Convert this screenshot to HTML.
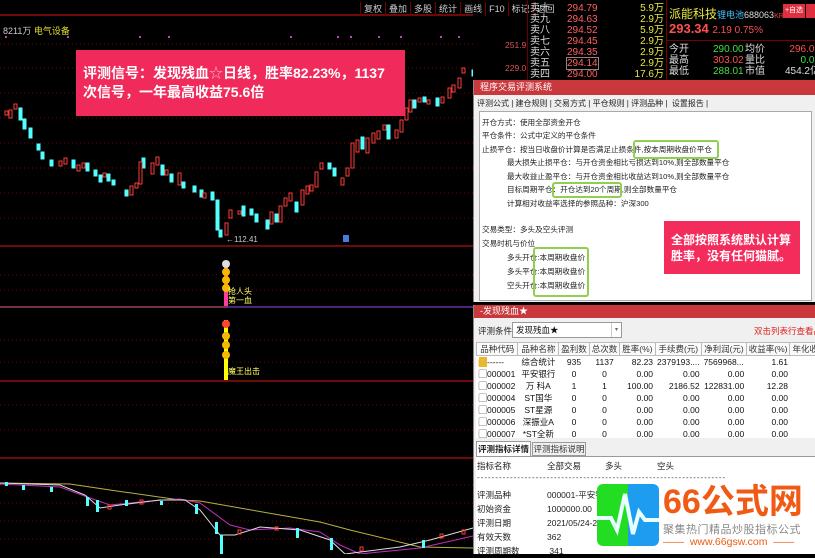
<!DOCTYPE html>
<html><head><meta charset="utf-8"><style>
*{margin:0;padding:0;box-sizing:border-box}
body{width:815px;height:554px;overflow:hidden;background:#000;font-family:"Liberation Sans","Noto Sans CJK SC",sans-serif;font-size:9px;position:relative}
.a{position:absolute;white-space:nowrap}
.tb span{display:inline-block;border-left:1px solid #700;padding:0 3px;color:#ccc;font-size:9px;line-height:14px}
.ob div{height:11px;line-height:11px;font-size:10px}
.dlg{position:absolute;left:473px;width:342px;background:#f0f0f0;border-left:1px solid #888}
.tt{background:#c8383c;color:#fff;font-size:9px;padding-left:6px}
.c1 .a{color:#222;font-size:7.6px}
.grn{position:absolute;border:2px solid #8fd14f;border-radius:3px}
table{border-collapse:collapse;font-size:8.5px;color:#111}
td{height:11px;padding:0 2px;white-space:nowrap}
th{font-weight:normal;border:1px solid #bbb;background:#fafafa;height:13px;padding:0 2px;color:#333}
</style></head><body>
<svg class="a" style="left:0;top:0" width="473" height="554">
<g stroke="#7a0000" stroke-dasharray="1 3">
<line x1="0" y1="44" x2="473" y2="44"/><line x1="0" y1="68" x2="473" y2="68"/><line x1="0" y1="93" x2="473" y2="93"/><line x1="0" y1="118" x2="473" y2="118"/><line x1="0" y1="143" x2="473" y2="143"/><line x1="0" y1="168" x2="473" y2="168"/><line x1="0" y1="193" x2="473" y2="193"/><line x1="0" y1="218" x2="473" y2="218"/>
<line x1="0" y1="275" x2="473" y2="275"/><line x1="0" y1="290" x2="473" y2="290"/><line x1="0" y1="340" x2="473" y2="340"/><line x1="0" y1="362" x2="473" y2="362"/><line x1="0" y1="405" x2="473" y2="405"/><line x1="0" y1="430" x2="473" y2="430"/><line x1="0" y1="485" x2="473" y2="485"/><line x1="0" y1="503" x2="473" y2="503"/><line x1="0" y1="521" x2="473" y2="521"/><line x1="0" y1="539" x2="473" y2="539"/>
</g>
<g stroke="#b01010" stroke-width="1.2"><line x1="0" y1="15" x2="500" y2="15"/><line x1="0" y1="246" x2="473" y2="246"/><line x1="0" y1="381" x2="473" y2="381"/><line x1="0" y1="458" x2="473" y2="458"/></g>
<line x1="0" y1="307" x2="473" y2="307" stroke="#a04060" stroke-width="1.5"/>
<g fill="#c040c0"><rect x="5" y="36" width="2" height="2"/><rect x="67" y="36" width="2" height="2"/><rect x="139" y="36" width="2" height="2"/><rect x="168" y="36" width="2" height="2"/><rect x="290" y="36" width="2" height="2"/><rect x="337" y="36" width="2" height="2"/><rect x="350" y="36" width="2" height="2"/><rect x="378" y="36" width="2" height="2"/><rect x="400" y="36" width="2" height="2"/><rect x="440" y="36" width="2" height="2"/><rect x="458" y="36" width="2" height="2"/></g>
<g stroke-width="1">
<g fill="#54ffff" stroke="#54ffff">
<rect x="19" y="108" width="3" height="12"/><rect x="23" y="119" width="3" height="10"/><rect x="29" y="128" width="3" height="10"/><rect x="37" y="144" width="3" height="6"/><rect x="41" y="152" width="3" height="7"/><rect x="50" y="160" width="3" height="6"/><rect x="72" y="160" width="3" height="8"/><rect x="86" y="163" width="3" height="8"/><rect x="94" y="170" width="3" height="6"/><rect x="99" y="175" width="3" height="7"/><rect x="107" y="174" width="3" height="7"/><rect x="112" y="180" width="3" height="5"/><rect x="125" y="190" width="3" height="6"/><rect x="142" y="158" width="3" height="10"/><rect x="161" y="165" width="3" height="10"/><rect x="170" y="174" width="3" height="8"/><rect x="182" y="182" width="3" height="6"/><rect x="193" y="186" width="3" height="6"/><rect x="200" y="190" width="3" height="7"/><rect x="211" y="192" width="3" height="8"/><rect x="216" y="200" width="3" height="30"/><rect x="219" y="230" width="3" height="7"/><rect x="242" y="206" width="3" height="10"/><rect x="250" y="209" width="3" height="6"/><rect x="255" y="214" width="3" height="8"/><rect x="266" y="220" width="3" height="9"/><rect x="275" y="214" width="3" height="8"/><rect x="295" y="202" width="3" height="10"/><rect x="328" y="163" width="3" height="6"/><rect x="333" y="168" width="3" height="8"/><rect x="361" y="137" width="3" height="12"/><rect x="387" y="125" width="3" height="14"/><rect x="413" y="100" width="3" height="8"/><rect x="423" y="97" width="3" height="5"/><rect x="436" y="98" width="3" height="8"/><rect x="472" y="70" width="3" height="6"/><rect x="488" y="62" width="3" height="5"/>
</g>
<g fill="none" stroke="#ff3c3c">
<rect x="5" y="111" width="3" height="4"/><rect x="14" y="104" width="3" height="5"/><rect x="9" y="110" width="3" height="8"/><rect x="59" y="161" width="3" height="5"/><rect x="64" y="158" width="3" height="6"/><rect x="77" y="165" width="3" height="6"/><rect x="82" y="163" width="3" height="5"/><rect x="103" y="173" width="3" height="4"/><rect x="130" y="186" width="3" height="9"/><rect x="135" y="183" width="3" height="5"/><rect x="139" y="162" width="3" height="22"/><rect x="151" y="163" width="3" height="11"/><rect x="156" y="157" width="3" height="8"/><rect x="165" y="170" width="3" height="5"/><rect x="178" y="173" width="3" height="12"/><rect x="203" y="193" width="3" height="5"/><rect x="225" y="223" width="3" height="12"/><rect x="229" y="210" width="3" height="8"/><rect x="238" y="211" width="3" height="3"/><rect x="270" y="212" width="3" height="12"/><rect x="279" y="206" width="3" height="16"/><rect x="284" y="198" width="3" height="8"/><rect x="289" y="193" width="3" height="8"/><rect x="301" y="190" width="3" height="15"/><rect x="306" y="186" width="3" height="8"/><rect x="310" y="185" width="3" height="6"/><rect x="315" y="172" width="3" height="15"/><rect x="320" y="163" width="3" height="6"/><rect x="341" y="178" width="3" height="7"/><rect x="346" y="168" width="3" height="8"/><rect x="351" y="143" width="3" height="25"/><rect x="356" y="140" width="3" height="12"/><rect x="366" y="138" width="3" height="15"/><rect x="372" y="133" width="3" height="10"/><rect x="377" y="131" width="3" height="8"/><rect x="383" y="125" width="3" height="5"/><rect x="395" y="130" width="3" height="8"/><rect x="400" y="120" width="3" height="12"/><rect x="405" y="108" width="3" height="12"/><rect x="409" y="100" width="3" height="12"/><rect x="418" y="98" width="3" height="4"/><rect x="427" y="100" width="3" height="4"/><rect x="441" y="97" width="3" height="6"/><rect x="448" y="88" width="3" height="10"/><rect x="452" y="85" width="3" height="7"/><rect x="458" y="78" width="3" height="10"/><rect x="462" y="68" width="3" height="5"/><rect x="480" y="70" width="3" height="10"/><rect x="484" y="66" width="3" height="6"/>
</g></g>
<text x="226" y="242" fill="#ccc" font-size="8">←112.41</text>
<rect x="343" y="235" width="6" height="7" fill="#4a7adf"/>
<rect x="224" y="262" width="4" height="44" fill="#ff3c9c"/>
<circle cx="226" cy="264" r="4" fill="#ddd"/><circle cx="226" cy="272" r="4" fill="#f6b800"/><circle cx="226" cy="280" r="4" fill="#f6b800"/><circle cx="226" cy="288" r="4" fill="#f6b800"/>
<text x="228" y="294" fill="#ffff60" font-size="8">抢人头</text><text x="228" y="303" fill="#ffff60" font-size="8">第一血</text>
<line x1="228" y1="307" x2="473" y2="307" stroke="#502080" stroke-width="2"/>
<rect x="224" y="320" width="4" height="60" fill="#ffff00"/>
<circle cx="226" cy="324" r="4" fill="#f43"/><circle cx="226" cy="336" r="4" fill="#f6b800"/><circle cx="226" cy="345" r="4" fill="#f6b800"/><circle cx="226" cy="355" r="4" fill="#f6b800"/>
<text x="228" y="374" fill="#ffff60" font-size="8">魔王出击</text>
<polyline fill="none" stroke="#b8b040" points="0,483 70,484 110,490 180,500 200,501 320,522 350,530 420,547 473,548"/>
<polyline fill="none" stroke="#c030c0" points="0,484 60,487 90,498 110,505 150,501 180,499 200,503 230,525 250,530 290,528 320,532 340,545 360,554 420,548 473,536"/>
<polyline fill="none" stroke="#ddd" points="0,483 60,485 85,495 100,508 120,505 160,500 185,500 200,510 220,535 235,535 260,527 300,530 330,540 345,554 400,547 430,540 473,528"/>
<g fill="#54ffff"><rect x="5" y="482" width="3" height="4"/><rect x="22" y="485" width="3" height="5"/><rect x="50" y="487" width="3" height="5"/><rect x="86" y="497" width="3" height="9"/><rect x="96" y="500" width="3" height="12"/><rect x="125" y="500" width="3" height="6"/><rect x="160" y="501" width="3" height="4"/><rect x="195" y="504" width="3" height="10"/><rect x="215" y="522" width="3" height="12"/><rect x="220" y="535" width="3" height="19"/><rect x="296" y="528" width="3" height="10"/><rect x="330" y="538" width="3" height="12"/><rect x="422" y="540" width="3" height="8"/></g>
<g fill="none" stroke="#ff3c3c"><rect x="108" y="505" width="3" height="4"/><rect x="140" y="500" width="3" height="4"/><rect x="238" y="530" width="3" height="4"/><rect x="275" y="527" width="3" height="3"/><rect x="360" y="547" width="3" height="4"/><rect x="440" y="534" width="3" height="4"/><rect x="462" y="530" width="3" height="4"/></g>
</svg>
<div class="a" style="left:3px;top:24px;color:#ccc;font-size:9px">8211万 <span style="color:#dddd30">电气设备</span></div>
<div class="a tb" style="left:360px;top:2px"><span>复权</span><span>叠加</span><span>多股</span><span>统计</span><span>画线</span><span>F10</span><span>标记</span><span>返回</span></div>
<div class="a" style="left:76px;top:50px;width:329px;height:66px;background:#f02a5a;color:#fff;font-size:14px;font-weight:bold;line-height:19px;padding:14px 0 0 7px">评测信号：发现残血<span style="color:#ff9fc0">☆</span>日线，胜率82.23%，1137<br>次信号，一年最高收益75.6倍</div>
<div class="a" style="left:505px;top:40px;color:#d55;font-size:8.5px">251.9</div>
<div class="a" style="left:505px;top:63px;color:#d55;font-size:8.5px">229.0</div>
<div class="a" style="left:527px;top:0;width:1px;height:80px;background:#600"></div>
<div class="a ob" style="left:530px;top:3px;color:#ddd"><div>卖十</div><div>卖九</div><div>卖八</div><div>卖七</div><div>卖六</div><div>卖五</div><div>卖四</div></div>
<div class="a ob" style="left:567px;top:3px;color:#ff6060"><div>294.79</div><div>294.63</div><div>294.52</div><div>294.45</div><div>294.35</div><div style="outline:1px solid #888">294.14</div><div>294.00</div></div>
<div class="a ob" style="left:620px;top:3px;width:44px;text-align:right;color:#e8e840"><div>5.9万</div><div>2.9万</div><div>5.9万</div><div>2.9万</div><div>2.9万</div><div>2.9万</div><div>17.6万</div></div>
<div class="a" style="left:666px;top:0;width:1px;height:80px;background:#700"></div>
<div class="a" style="left:669px;top:5px;color:#e8e840;font-size:12px">派能科技<span style="color:#40c0ff;font-size:9px">锂电池</span><span style="color:#ddd;font-size:9px">688063</span><span style="color:#e44;font-size:7px">KR000</span></div>
<div class="a" style="left:783px;top:4px;width:22px;height:14px;background:#e03040;color:#fff;font-size:7px;line-height:14px;text-align:center">+自选</div>
<div class="a" style="left:806px;top:4px;width:9px;height:14px;background:#e03040"></div>
<div class="a" style="left:669px;top:21px;color:#ff5050;font-size:13px;font-weight:bold">293.34 <span style="font-size:10px;font-weight:normal">2.19 0.75%</span></div>
<div class="a" style="left:667px;top:40px;width:148px;height:1px;background:#700"></div>
<div class="a ob" style="left:669px;top:44px;color:#ddd"><div>今开</div><div>最高</div><div>最低</div></div>
<div class="a ob" style="left:713px;top:44px;color:#40e040"><div>290.00</div><div style="color:#ff5050">303.02</div><div>288.01</div></div>
<div class="a ob" style="left:745px;top:44px;color:#ddd"><div>均价</div><div>量比</div><div>市值</div></div>
<div class="a ob" style="left:780px;top:44px;width:40px;text-align:right;color:#ff5050"><div>296.09</div><div style="color:#40e040">0.08</div><div style="color:#ddd">454.2亿</div></div>
<div class="dlg c1" style="top:80px;height:222px">
<div class="tt" style="height:15px;line-height:15px">程序交易评测系统</div>
<div class="a" style="left:3px;top:18px;font-size:8px;color:#222">评测公式 | 建仓规则 | 交易方式 | 平仓规则 | 评测品种 | &nbsp;设置报告 |</div>
<div class="a" style="left:5px;top:31px;width:333px;height:190px;background:#fff;border:1px solid #aaa"></div>
<div class="a" style="left:8px;top:37px">开仓方式：使用全部资金开仓</div>
<div class="a" style="left:8px;top:50px">平仓条件：公式中定义的平仓条件</div>
<div class="a" style="left:8px;top:64px">止损平仓：按当日收盘价计算是否满足止损条件,按本周期收盘价平仓</div>
<div class="a" style="left:33px;top:77px">最大损失止损平仓：与开仓资金相比亏损达到10%,则全部数量平仓</div>
<div class="a" style="left:33px;top:91px">最大收益止盈平仓：与开仓资金相比收益达到10%,则全部数量平仓</div>
<div class="a" style="left:33px;top:104px">目标周期平仓：开仓达到20个周期,则全部数量平仓</div>
<div class="a" style="left:33px;top:118px">计算相对收益率选择的参照品种：沪深300</div>
<div class="a" style="left:8px;top:144px">交易类型：多头及空头评测</div>
<div class="a" style="left:8px;top:158px">交易时机与价位</div>
<div class="a" style="left:33px;top:172px">多头开仓:本周期收盘价</div>
<div class="a" style="left:33px;top:186px">多头平仓:本周期收盘价</div>
<div class="a" style="left:33px;top:200px">空头开仓:本周期收盘价</div>
<div class="grn" style="left:159px;top:60px;width:86px;height:19px"></div>
<div class="grn" style="left:78px;top:102px;width:70px;height:16px"></div>
<div class="grn" style="left:59px;top:167px;width:56px;height:50px"></div>
<div class="a" style="left:190px;top:141px;width:136px;height:53px;background:#f42c5c;color:#fff;font-size:12px;font-weight:bold;line-height:16px;padding:11px 0 0 7px;white-space:normal">全部按照系统默认计算胜率，没有任何猫腻。</div>
</div>
<div class="dlg" style="top:305px;height:249px">
<div class="tt" style="height:13px;line-height:13px">-发现残血★</div>
<div class="a" style="left:4px;top:20px;font-size:8.5px;color:#222">评测条件:</div>
<div class="a" style="left:38px;top:17px;width:110px;height:16px;background:#fff;border:1px solid #999;font-size:8.5px;line-height:14px;padding-left:3px;color:#111">发现残血★<span style="position:absolute;right:0;top:0;width:10px;height:14px;border-left:1px solid #ccc;font-size:6px;text-align:center;color:#666">▾</span></div>
<div class="a" style="left:280px;top:20px;color:#e02020;font-size:8.5px">双击列表行查看品种</div>
<div class="a" style="left:2px;top:37px;width:340px;height:96px;background:#fff"></div>
<table class="a" style="left:2px;top:37px;width:345px">
<tr><th style="width:42px">品种代码</th><th style="width:43px">品种名称</th><th>盈利数</th><th>总次数</th><th>胜率(%)</th><th>手续费(元)</th><th>净利润(元)</th><th>收益率(%)</th><th>年化收</th></tr>
<tr><td><span style="background:#e8b830;color:#e8b830">▆</span>------</td><td align="center">综合统计</td><td align="center">935</td><td align="center">1137</td><td align="right">82.23</td><td>2379193....</td><td>7569968...</td><td align="right">1.61</td><td></td></tr>
<tr><td>▢000001</td><td align="center">平安银行</td><td align="center">0</td><td align="center">0</td><td align="right">0.00</td><td align="right">0.00</td><td align="right">0.00</td><td align="right">0.00</td><td></td></tr>
<tr><td>▢000002</td><td align="center">万 科A</td><td align="center">1</td><td align="center">1</td><td align="right">100.00</td><td align="right">2186.52</td><td align="right">122831.00</td><td align="right">12.28</td><td></td></tr>
<tr><td>▢000004</td><td align="center">ST国华</td><td align="center">0</td><td align="center">0</td><td align="right">0.00</td><td align="right">0.00</td><td align="right">0.00</td><td align="right">0.00</td><td></td></tr>
<tr><td>▢000005</td><td align="center">ST星源</td><td align="center">0</td><td align="center">0</td><td align="right">0.00</td><td align="right">0.00</td><td align="right">0.00</td><td align="right">0.00</td><td></td></tr>
<tr><td>▢000006</td><td align="center">深振业A</td><td align="center">0</td><td align="center">0</td><td align="right">0.00</td><td align="right">0.00</td><td align="right">0.00</td><td align="right">0.00</td><td></td></tr>
<tr><td>▢000007</td><td align="center">*ST全新</td><td align="center">0</td><td align="center">0</td><td align="right">0.00</td><td align="right">0.00</td><td align="right">0.00</td><td align="right">0.00</td><td></td></tr>
</table>
<div class="a" style="left:2px;top:136px;width:55px;height:15px;background:#fff;border:1px solid #999;border-bottom:none;font-size:8.5px;font-weight:bold;line-height:14px;text-align:center;color:#222">评测指标详情</div>
<div class="a" style="left:58px;top:137px;width:54px;height:14px;border:1px solid #999;font-size:8.5px;line-height:13px;text-align:center;color:#333">评测指标说明</div>
<div class="a" style="left:2px;top:151px;width:340px;height:98px;background:#fff;border-top:1px solid #999"></div>
<div class="a" style="left:3px;top:155px;font-size:8.5px;color:#222">指标名称</div><div class="a" style="left:73px;top:155px;font-size:8.5px;color:#222">全部交易</div><div class="a" style="left:131px;top:155px;font-size:8.5px;color:#222">多头</div><div class="a" style="left:183px;top:155px;font-size:8.5px;color:#222">空头</div>
<div class="a" style="left:3px;top:168px;font-size:8px;color:#444;letter-spacing:1px">--------------------------------------------------------------------</div>
<div class="a" style="left:3px;top:183px;font-size:8.5px;color:#222;line-height:14px">评测品种<br>初始资金<br>评测日期<br>有效天数<br>评测周期数</div>
<div class="a" style="left:73px;top:183px;font-size:8.5px;color:#222;line-height:14px">000001-平安银行<br>1000000.00<br>2021/05/24-2022<br>362<br>&nbsp;341</div>
</div>
<svg class="a" style="left:597px;top:484px" width="62" height="62">
<rect x="0" y="0" width="31" height="62" rx="6" fill="#22dd22"/><rect x="25" y="0" width="6" height="62" fill="#22dd22"/>
<rect x="31" y="0" width="31" height="62" rx="6" fill="#1e9cf0"/><rect x="31" y="0" width="6" height="62" fill="#1e9cf0"/>
<polyline points="0,34 14,34 20,46 28,10 36,50 42,28 48,36 62,36" fill="none" stroke="#e8ffff" stroke-width="4"/>
</svg>
<div class="a" style="left:663px;top:482px;color:#f05a14;font-size:34px;font-weight:bold;line-height:40px">66公式网</div>
<div class="a" style="left:663px;top:521px;color:#888;font-size:11px;letter-spacing:0.5px">聚集热门精品炒股指标公式</div>
<div class="a" style="left:663px;top:536px;color:#f05a14;font-size:10.5px">——&nbsp; www.66gsw.com &nbsp;——</div>
</body></html>
